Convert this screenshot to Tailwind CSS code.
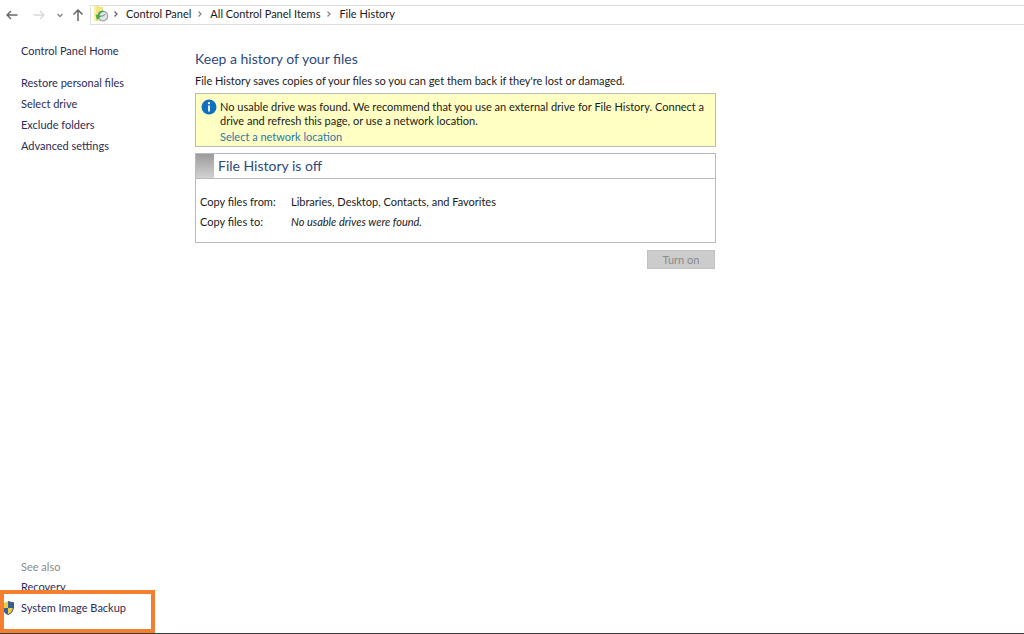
<!DOCTYPE html>
<html lang="en">
<head>
  <meta charset="UTF-8">
  <meta name="viewport" content="width=device-width, initial-scale=1.0">
  <title>File History</title>
  <script src="https://cdn.jsdelivr.net/npm/@tailwindcss/browser@4"></script>
</head>
<body class="flex flex-col min-h-screen bg-white text-[#1a1a1a] text-[11px] leading-[14px] font-['Lato','Open_Sans',sans-serif] border-b border-[#3c3a3a]">
  <!-- Address bar -->
  <header class="flex items-center pt-[5px]">
    <div class="flex items-center w-[90px] h-5 pl-1.5">
      <button type="button" aria-label="Back" class="w-3">
        <svg class="w-3 h-3" viewBox="0 0 12 12" fill="none" stroke="#666" stroke-width="1.4"><path d="M11.5 6H1M5 2L1 6l4 4"/></svg>
      </button>
      <button type="button" aria-label="Forward" class="w-3 ml-[15px]">
        <svg class="w-3 h-3" viewBox="0 0 12 12" fill="none" stroke="#d8d8d8" stroke-width="1.3"><path d="M0.5 6H11M7 2l4 4-4 4"/></svg>
      </button>
      <button type="button" aria-label="Recent locations" class="w-2 ml-[11px]">
        <svg class="w-2 h-3" viewBox="0 0 8 12" fill="none" stroke="#888" stroke-width="1.4"><path d="M1.5 5L4 7.500 6.500 5"/></svg>
      </button>
      <button type="button" aria-label="Up" class="w-3 ml-2">
        <svg class="w-3 h-3" viewBox="0 0 12 12" fill="none" stroke="#666" stroke-width="1.5"><path d="M6 12V1M1.500 5.500L6 1l4.500 4.500"/></svg>
      </button>
    </div>
    <nav aria-label="Breadcrumb" class="flex flex-1 items-center h-5 pl-0.5 pb-0.5 border border-r-0 border-[#dedede] whitespace-nowrap">
      <svg class="w-4 h-4" viewBox="0 0 16 16" fill="none">
        <path d="M1 0h5l1 1h3v14H1z" fill="#f5e585"/>
        <path d="M1 0h2v15H1z" fill="#fbf0a8"/>
        <circle cx="10" cy="10" r="4.800" fill="#dfe4e9" stroke="#9aa3ad" stroke-width="1.200"/>
        <path d="M10 10l2.500-2M10 10H7.500" stroke="#7a8590"/>
        <path d="M12 5.500C8.500 3.800 5.500 5 4.600 9L2.500 8.500 4 14l4.500-4-2-.5c.6-2.600 2.500-3.500 5.500-4z" fill="#45a84f"/>
      </svg>
      <svg class="w-2 h-2 ml-1" viewBox="0 0 8 8" fill="none" stroke="#666" stroke-width="1.3"><path d="M1.500 1.500L4 4 1.500 6.500"/></svg>
      <a href="#" class="ml-[5px]">Control Panel</a>
      <svg class="w-2 h-2 ml-1.5" viewBox="0 0 8 8" fill="none" stroke="#888" stroke-width="1.3"><path d="M1.500 1.500L4 4 1.500 6.500"/></svg>
      <a href="#" class="ml-[5px]">All Control Panel Items</a>
      <svg class="w-2 h-2 ml-1.5" viewBox="0 0 8 8" fill="none" stroke="#888" stroke-width="1.3"><path d="M1.500 1.500L4 4 1.500 6.500"/></svg>
      <a href="#" class="ml-[5px]">File History</a>
    </nav>
  </header>

  <div class="flex flex-1">
    <!-- Side links -->
    <aside class="flex flex-col w-[195px] pt-[19px] text-[#2b2b55]">
      <a href="#" class="ml-[21px]">Control Panel Home</a>
      <nav class="flex flex-col gap-[7px] mt-[18px] ml-[21px]">
        <a href="#">Restore personal files</a>
        <a href="#">Select drive</a>
        <a href="#">Exclude folders</a>
        <a href="#">Advanced settings</a>
      </nav>
      <div class="flex flex-col mt-auto">
        <h2 class="ml-[21px] text-[#8a8a8a]">See also</h2>
        <a href="#" class="mt-[6px] ml-[21px]">Recovery</a>
        <!-- Highlighted entry, its frame covers the foot of the link above -->
        <a href="#" class="relative flex items-center w-[155px] h-[43px] -mt-1 border-4 border-[#f47f31] bg-white">
          <svg class="w-2.5 h-[14px] -mt-[7px]" viewBox="0 0 10 14">
            <path d="M0 1.500Q2.500 1.500 4 0v7H0z" fill="#ecca4a"/>
            <path d="M4 0q2 1.700 5.500 1.500V7H4z" fill="#35618f"/>
            <path d="M0 7h4v7Q1.500 13 0 11z" fill="#35618f"/>
            <path d="M4 7h5.500Q9 11.500 4 14z" fill="#ecca4a"/>
            <path d="M4 0q2 1.700 5.500 1.500V7Q9 11.500 4 14" fill="none" stroke="#46596b"/>
          </svg>
          <span class="-mt-[7px] ml-[7px]">System Image Backup</span>
        </a>
      </div>
    </aside>

    <main class="flex-1 pt-[25px]">
      <div class="max-w-[521px]">
        <h1 class="text-[14px] leading-[18px] text-[#2d4a7c]">Keep a history of your files</h1>
        <p class="mt-[6px] whitespace-nowrap">File History saves copies of your files so you can get them back if they're lost or damaged.</p>

        <div class="flex gap-[3px] mt-[5px] pt-[6px] pb-[2px] pl-[5px] border border-[#b9bcae] bg-[#ffffc4]">
          <svg class="shrink-0 w-4 h-4 -mt-px" viewBox="0 0 16 16">
            <circle cx="8" cy="8" r="7.500" fill="#0f6fc0"/>
            <circle cx="8" cy="4.200" r="1.100" fill="#fff"/>
            <path d="M8 6.500v6" stroke="#fff" stroke-width="1.800"/>
          </svg>
          <div>
            <p>No usable drive was found. We recommend that you use an external drive for File History. Connect a drive and refresh this page, or use a network location.</p>
            <a href="#" class="block mt-[2px] text-[#2a76a8]">Select a network location</a>
          </div>
        </div>

        <section class="mt-[6px] border border-[#b9b9c3]">
          <div class="flex items-center h-[25px] border-b border-[#b9b9c3]">
            <div class="w-[18px] h-full bg-linear-to-b from-[#9c9c9c] to-[#d2d2d2]"></div>
            <h2 class="ml-1 text-[14px] leading-[18px] text-[#2d4a7c]">File History is off</h2>
          </div>
          <dl class="grid grid-cols-[91px_1fr] gap-y-[6px] pt-4 pb-[13px] pl-1">
            <dt>Copy files from:</dt>
            <dd>Libraries, Desktop, Contacts, and Favorites</dd>
            <dt>Copy files to:</dt>
            <dd class="italic">No usable drives were found.</dd>
          </dl>
        </section>

        <div class="flex justify-end mt-[7px] pr-px">
          <button type="button" disabled class="w-[68px] h-[19px] border border-[#c2c2c2] bg-[#cccccc] text-[#8a8a8a]">Turn on</button>
        </div>
      </div>
    </main>
  </div>
</body>
</html>
